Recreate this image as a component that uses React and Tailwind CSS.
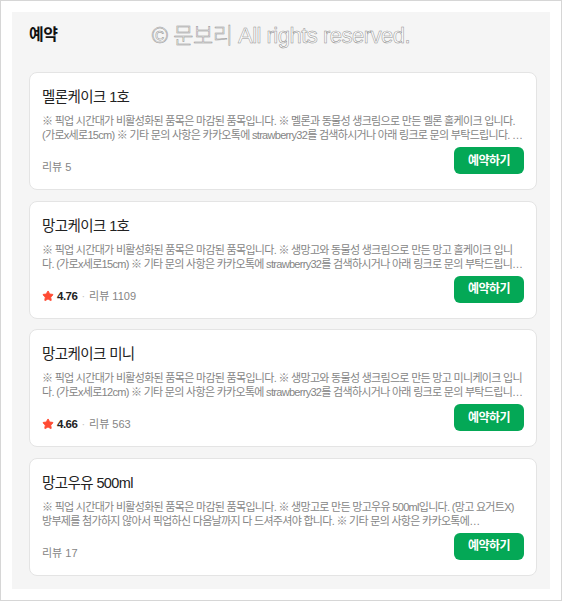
import { Star } from "lucide-react";

const FONT = {
  fontFamily: '"Liberation Sans", "Noto Sans CJK KR", sans-serif',
};

const items = [
  {
    id: 1,
    name: "멜론케이크 1호",
    desc: "※ 픽업 시간대가 비활성화된 품목은 마감된 품목입니다. ※ 멜론과 동물성 생크림으로 만든 멜론 홀케이크 입니다. (가로x세로15cm) ※ 기타 문의 사항은 카카오톡에 strawberry32를 검색하시거나 아래 링크로 문의 부탁드립니다. 감사합니다.",
    rating: null,
    reviews: 5,
  },
  {
    id: 2,
    name: "망고케이크 1호",
    desc: "※ 픽업 시간대가 비활성화된 품목은 마감된 품목입니다. ※ 생망고와 동물성 생크림으로 만든 망고 홀케이크 입니다. (가로x세로15cm) ※ 기타 문의 사항은 카카오톡에 strawberry32를 검색하시거나 아래 링크로 문의 부탁드립니다. 감사합니다.",
    rating: "4.76",
    reviews: 1109,
  },
  {
    id: 3,
    name: "망고케이크 미니",
    desc: "※ 픽업 시간대가 비활성화된 품목은 마감된 품목입니다. ※ 생망고와 동물성 생크림으로 만든 망고 미니케이크 입니다. (가로x세로12cm) ※ 기타 문의 사항은 카카오톡에 strawberry32를 검색하시거나 아래 링크로 문의 부탁드립니다. 감사합니다.",
    rating: "4.66",
    reviews: 563,
  },
  {
    id: 4,
    name: "망고우유 500ml",
    desc: "※ 픽업 시간대가 비활성화된 품목은 마감된 품목입니다. ※ 생망고로 만든 망고우유 500ml입니다. (망고 요거트X) 방부제를 첨가하지 않아서 픽업하신 다음날까지 다 드셔주셔야 합니다. ※ 기타 문의 사항은 카카오톡에 strawberry32를 검색하시거나 아래 링크로 문의 부탁드립니다.",
    rating: null,
    reviews: 17,
  },
];

function ItemCard({ item }) {
  return (
    <div className="h-[118px] bg-white border border-[#e4e4e4] rounded-[8px] pt-[14px] px-[12px] pb-[15px] flex flex-col">
      <h3 className="text-[14.5px] leading-[20px] tracking-[-0.6px] text-[#222]">
        {item.name}
      </h3>
      <p className="mt-[7px] text-[11px] leading-[14px] tracking-[-0.7px] text-[#858585] line-clamp-2">
        {item.desc}
      </p>
      <div className="mt-auto flex items-end justify-between">
        <div className="flex items-center text-[11px] leading-[14px]">
          {item.rating && (
            <>
              <Star className="w-[12px] h-[12px] fill-[#ff4b33] text-[#ff4b33] mr-[3px]" />
              <span className="font-bold text-[#222] text-[11.5px] tracking-[-0.5px]">
                {item.rating}
              </span>
              <span className="mx-[4px] text-[#c4c4c4]">·</span>
            </>
          )}
          <span className="text-[#858585]">리뷰 {item.reviews}</span>
        </div>
        <button className="w-[70px] h-[27px] rounded-[6px] bg-[#04a856] text-white text-[12px] font-bold tracking-[-0.5px]">
          예약하기
        </button>
      </div>
    </div>
  );
}

export default function App() {
  return (
    <div
      style={FONT}
      className="relative w-[562px] h-[601px] bg-white border border-[#d6d6d6] p-[11px]"
    >
      <div className="h-full bg-[#f5f5f5] pl-[17px] pr-[13px] pt-[11px]">
        <h2 className="text-[16px] leading-[24px] font-bold text-[#111] tracking-[-0.5px]">
          예약
        </h2>
        <div className="mt-[25px] flex flex-col gap-[10.5px]">
          {items.map((item) => (
            <ItemCard key={item.id} item={item} />
          ))}
        </div>
      </div>

      {/* watermark */}
      <div className="absolute left-0 right-0 top-[20px] text-center pointer-events-none">
        <span className="text-[22px] leading-[30px] font-light text-white tracking-[-0.5px] [-webkit-text-stroke:0.5px_#8f8f8f]">
          © 문보리 All rights reserved.
        </span>
      </div>
    </div>
  );
}
